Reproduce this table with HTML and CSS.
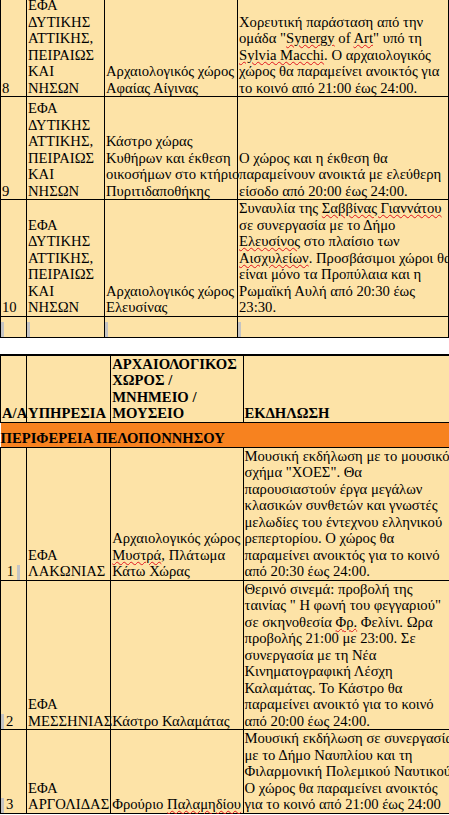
FILE: index.html
```html
<!DOCTYPE html>
<html lang="el">
<head>
<meta charset="utf-8">
<title>Εκδηλώσεις</title>
<link rel="stylesheet" href="styles.css">
</head>
<body>
<table class="grid top">
  <colgroup><col class="c1"><col class="c2a"><col class="c3a"><col class="c4a"></colgroup>
  <tr class="r8">
    <td class="num">8</td>
    <td>ΕΦΑ<br>ΔΥΤΙΚΗΣ<br>ΑΤΤΙΚΗΣ,<br>ΠΕΙΡΑΙΩΣ<br>ΚΑΙ<br>ΝΗΣΩΝ</td>
    <td>Αρχαιολογικός χώρος<br>Αφαίας Αίγινας</td>
    <td>Χορευτική παράσταση από την<br>ομάδα "<span class="sp">Synergy</span> of <span class="sp">Art</span>" υπό τη<br><span class="sp">Sylvia Macchi</span>. Ο αρχαιολογικός<br>χώρος θα παραμείνει ανοικτός για<br>το κοινό από 21:00 έως 24:00.</td>
  </tr>
  <tr class="r9">
    <td class="num">9</td>
    <td>ΕΦΑ<br>ΔΥΤΙΚΗΣ<br>ΑΤΤΙΚΗΣ,<br>ΠΕΙΡΑΙΩΣ<br>ΚΑΙ<br>ΝΗΣΩΝ</td>
    <td>Κάστρο χώρας<br>Κυθήρων και έκθεση<br>οικοσήμων στο κτήριο<br>Πυριτιδαποθήκης</td>
    <td>Ο χώρος και η έκθεση θα<br>παραμείνουν ανοικτά με ελεύθερη<br>είσοδο από 20:00 έως 24:00.</td>
  </tr>
  <tr class="r10">
    <td class="num">10</td>
    <td>ΕΦΑ<br>ΔΥΤΙΚΗΣ<br>ΑΤΤΙΚΗΣ,<br>ΠΕΙΡΑΙΩΣ<br>ΚΑΙ<br>ΝΗΣΩΝ</td>
    <td>Αρχαιολογικός χώρος<br>Ελευσίνας</td>
    <td>Συναυλία της <span class="sp">Σαββίνας Γιαννάτου</span><br>σε συνεργασία με το Δήμο<br><span class="sp">Ελευσίνος</span> στο πλαίσιο των<br><span class="sp">Αισχυλείων</span>. Προσβάσιμοι χώροι θα<br>είναι μόνο τα Προπύλαια και η<br>Ρωμαϊκή Αυλή από 20:30 έως<br>23:30.</td>
  </tr>
  <tr class="rempty">
    <td><span class="mark"></span></td>
    <td><span class="mark"></span></td>
    <td><span class="mark"></span></td>
    <td><span class="mark"></span></td>
  </tr>
</table>

<table class="grid bottom">
  <colgroup><col class="c1"><col class="c2b"><col class="c3b"><col class="c4b"></colgroup>
  <tr class="rhead">
    <td class="hd">Α/Α</td>
    <td class="hd">ΥΠΗΡΕΣΙΑ</td>
    <td class="hd">ΑΡΧΑΙΟΛΟΓΙΚΟΣ<br>ΧΩΡΟΣ /<br>ΜΝΗΜΕΙΟ /<br>ΜΟΥΣΕΙΟ</td>
    <td class="hd">ΕΚΔΗΛΩΣΗ</td>
  </tr>
  <tr class="rregion">
    <td colspan="4" class="region">ΠΕΡΙΦΕΡΕΙΑ ΠΕΛΟΠΟΝΝΗΣΟΥ</td>
  </tr>
  <tr class="rb1">
    <td class="numr">1<span class="mark after"></span></td>
    <td>ΕΦΑ<br>ΛΑΚΩΝΙΑΣ</td>
    <td>Αρχαιολογικός χώρος<br><span class="sp">Μυστρά</span>, Πλάτωμα<br>Κάτω Χώρας</td>
    <td>Μουσική εκδήλωση με το μουσικό<br>σχήμα "ΧΟΕΣ". Θα<br>παρουσιαστούν έργα μεγάλων<br>κλασικών συνθετών και γνωστές<br>μελωδίες του έντεχνου ελληνικού<br>ρεπερτορίου. Ο χώρος θα<br>παραμείνει ανοικτός για το κοινό<br>από 20:30 έως 24:00.</td>
  </tr>
  <tr class="rb2">
    <td class="numl"><span class="mark before"></span>2</td>
    <td>ΕΦΑ<br>ΜΕΣΣΗΝΙΑΣ</td>
    <td>Κάστρο Καλαμάτας</td>
    <td>Θερινό σινεμά: προβολή της<br>ταινίας " Η φωνή του φεγγαριού"<br>σε σκηνοθεσία <span class="sp">Φρ.</span> Φελίνι. Ωρα<br>προβολής 21:00 με 23:00. Σε<br>συνεργασία με τη Νέα<br>Κινηματογραφική Λέσχη<br>Καλαμάτας. Το Κάστρο θα<br>παραμείνει ανοικτό για το κοινό<br>από 20:00 έως 24:00.</td>
  </tr>
  <tr class="rb3">
    <td class="numl"><span class="mark before"></span>3</td>
    <td>ΕΦΑ<br>ΑΡΓΟΛΙΔΑΣ</td>
    <td>Φρούριο <span class="sp">Παλαμηδίου</span></td>
    <td>Μουσική εκδήλωση σε συνεργασία<br>με το Δήμο Ναυπλίου και τη<br>Φιλαρμονική Πολεμικού Ναυτικού.<br>Ο χώρος θα παραμείνει ανοικτός<br>για το κοινό από 21:00 έως 24:00</td>
  </tr>
</table>
</body>
</html>
```

FILE: styles.css
```css
html, body {
  margin: 0;
  padding: 0;
  background: #ffffff;
  overflow: hidden;
}

body {
  font-family: "Liberation Serif", "Times New Roman", "DejaVu Serif", serif;
  font-size: 14.67px;
  line-height: 16.5px;
  color: #000000;
}

.grid {
  border-collapse: collapse;
  table-layout: fixed;
}

.grid td {
  background: #fde3a7;
  border: 1px solid #000000;
  vertical-align: bottom;
  padding: 0 1px;
  white-space: nowrap;
  overflow: visible;
}

.top {
  width: 448px;
  margin-top: -4px;
}

.c1 { width: 26px; }
.c2a { width: 78px; }
.c3a { width: 133px; }
.c4a { width: 211px; }

.c2b { width: 84px; }
.c3b { width: 132px; }
.c4b { width: 212px; }

.r8 td { height: 99px; }
.r9 td { height: 102px; }
.r10 td { height: 115px; }
.rempty td { height: 20px; padding: 0; }

.num { padding-left: 2px; }

.bottom {
  width: 456px;
  margin-top: 16px;
  border-top: 2px solid #000000;
}

.bottom tr:first-child td { border-top: 2px solid #000000; }

.rhead td { height: 66px; }
.hd {
  font-weight: bold;
  padding: 0;
}
.hd + .hd { padding-left: 1px; }

.rregion td { height: 24px; }
.grid td.region {
  background: #f7821f;
  font-weight: bold;
  padding: 0;
  border-left: 0;
}

.rb1 td { height: 130px; }
.rb2 td { height: 148px; }
.rb3 td { height: 82px; }

.numr {
  text-align: right;
}
.grid td.numr { padding-right: 6px; }
.grid td.numl { padding-left: 0; }

.mark {
  display: inline-block;
  width: 3px;
  height: 15px;
  background: #c4c4c4;
  vertical-align: bottom;
}
.mark.after { margin-left: 3px; }
.mark.before { margin-right: 2px; }

.sp {
  text-decoration: underline wavy #e0141e;
  text-decoration-thickness: 1px;
  text-underline-offset: 1px;
}
```
